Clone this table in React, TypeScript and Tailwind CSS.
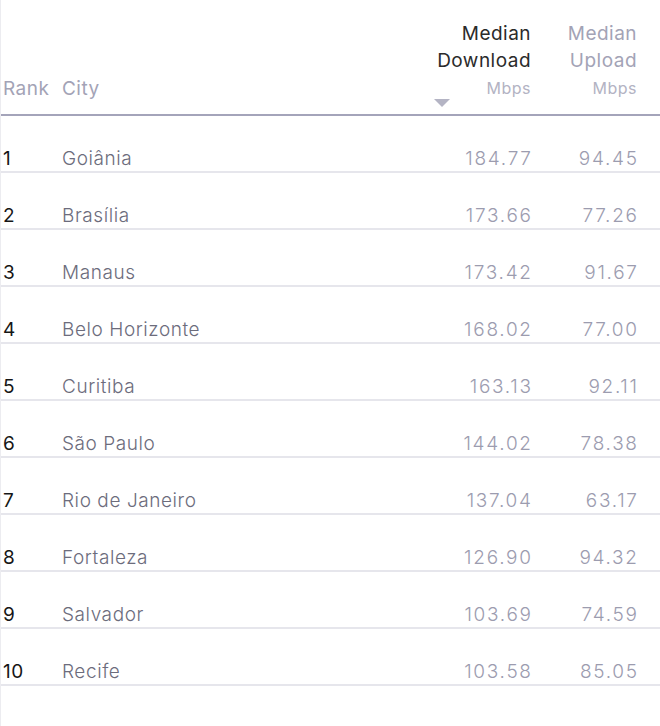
import React from "react";

const rows = [
  { rank: 1, city: "Goiânia", down: "184.77", up: "94.45" },
  { rank: 2, city: "Brasília", down: "173.66", up: "77.26" },
  { rank: 3, city: "Manaus", down: "173.42", up: "91.67" },
  { rank: 4, city: "Belo Horizonte", down: "168.02", up: "77.00" },
  { rank: 5, city: "Curitiba", down: "163.13", up: "92.11" },
  { rank: 6, city: "São Paulo", down: "144.02", up: "78.38" },
  { rank: 7, city: "Rio de Janeiro", down: "137.04", up: "63.17" },
  { rank: 8, city: "Fortaleza", down: "126.90", up: "94.32" },
  { rank: 9, city: "Salvador", down: "103.69", up: "74.59" },
  { rank: 10, city: "Recife", down: "103.58", up: "85.05" },
];

const App = () => {
  return (
    <div
      className="w-[660px] h-[726px] bg-white border-l border-[#ececf0] overflow-hidden"
      style={{ fontFamily: "Inter, 'Noto Sans', sans-serif" }}
    >
      {/* Header */}
      <div className="grid grid-cols-[59px_1fr_120px_106px] pl-[2px] pr-[23px] pt-[20px] border-b-2 border-[#a4a4ba] tracking-[0.03em]">
        <div className="self-end pb-[13px] text-[19px] leading-[24px] text-[#a3a3b6]">Rank</div>
        <div className="self-end pb-[13px] text-[19px] leading-[24px] text-[#a3a3b6]">City</div>
        <div className="flex flex-col items-end text-right">
          <span className="text-[19px] leading-[27px] text-[#2b2b2b]">Median</span>
          <span className="text-[19px] leading-[27px] text-[#2b2b2b]">Download</span>
          <span className="mt-[3px] text-[16px] leading-[22px] text-[#b3b3c3]">Mbps</span>
          <div className="w-full flex justify-end pr-[81px] pb-[7px]">
            <svg width="16" height="8" viewBox="0 0 16 8">
              <polygon points="0,0 16,0 8,8" fill="#b4b4c4" />
            </svg>
          </div>
        </div>
        <div className="flex flex-col items-end text-right">
          <span className="text-[19px] leading-[27px] text-[#a3a3b6]">Median</span>
          <span className="text-[19px] leading-[27px] text-[#a3a3b6]">Upload</span>
          <span className="mt-[3px] text-[16px] leading-[22px] text-[#b3b3c3]">Mbps</span>
        </div>
      </div>

      {/* Rows */}
      {rows.map((row) => (
        <div
          key={row.rank}
          className="grid grid-cols-[59px_1fr_120px_106px] pl-[2px] pr-[23px] pt-[31px] pb-0 border-b-2 border-[#e6e6ec] text-[19px] leading-[24px]"
        >
          <span className="text-[#161616] tracking-[0.03em]">{row.rank}</span>
          <span className="text-[#6c6c7c] font-light tracking-[0.03em]">{row.city}</span>
          <span className="text-right text-[#9c9caf] font-light tracking-[0.09em] -mr-[0.09em]">{row.down}</span>
          <span className="text-right text-[#9c9caf] font-light tracking-[0.09em] -mr-[0.09em]">{row.up}</span>
        </div>
      ))}
    </div>
  );
};

export default App;
